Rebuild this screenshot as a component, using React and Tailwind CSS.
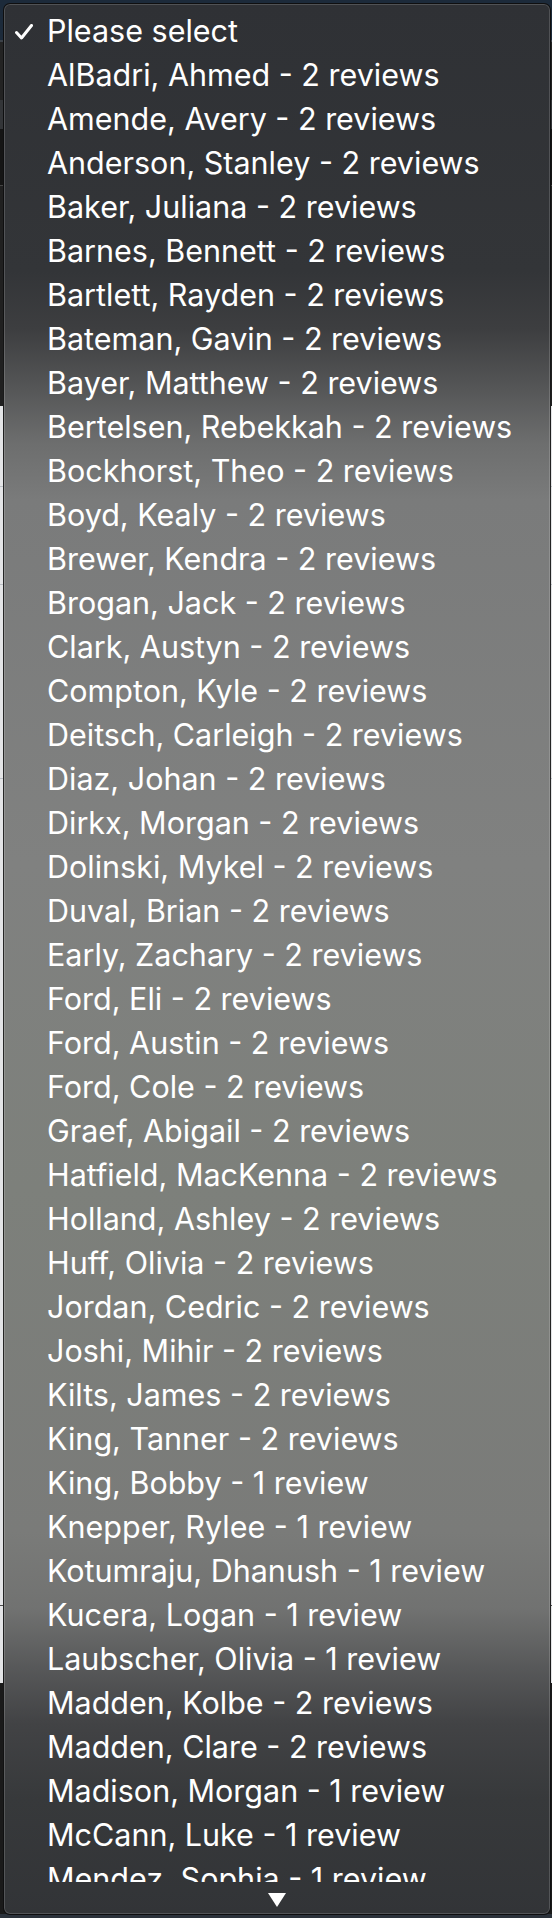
import React from 'react';

const options = [
  'AlBadri, Ahmed - 2 reviews',
  'Amende, Avery - 2 reviews',
  'Anderson, Stanley - 2 reviews',
  'Baker, Juliana - 2 reviews',
  'Barnes, Bennett - 2 reviews',
  'Bartlett, Rayden - 2 reviews',
  'Bateman, Gavin - 2 reviews',
  'Bayer, Matthew - 2 reviews',
  'Bertelsen, Rebekkah - 2 reviews',
  'Bockhorst, Theo - 2 reviews',
  'Boyd, Kealy - 2 reviews',
  'Brewer, Kendra - 2 reviews',
  'Brogan, Jack - 2 reviews',
  'Clark, Austyn - 2 reviews',
  'Compton, Kyle - 2 reviews',
  'Deitsch, Carleigh - 2 reviews',
  'Diaz, Johan - 2 reviews',
  'Dirkx, Morgan - 2 reviews',
  'Dolinski, Mykel - 2 reviews',
  'Duval, Brian - 2 reviews',
  'Early, Zachary - 2 reviews',
  'Ford, Eli - 2 reviews',
  'Ford, Austin - 2 reviews',
  'Ford, Cole - 2 reviews',
  'Graef, Abigail - 2 reviews',
  'Hatfield, MacKenna - 2 reviews',
  'Holland, Ashley - 2 reviews',
  'Huff, Olivia - 2 reviews',
  'Jordan, Cedric - 2 reviews',
  'Joshi, Mihir - 2 reviews',
  'Kilts, James - 2 reviews',
  'King, Tanner - 2 reviews',
  'King, Bobby - 1 review',
  'Knepper, Rylee - 1 review',
  'Kotumraju, Dhanush - 1 review',
  'Kucera, Logan - 1 review',
  'Laubscher, Olivia - 1 review',
  'Madden, Kolbe - 2 reviews',
  'Madden, Clare - 2 reviews',
  'Madison, Morgan - 1 review',
  'McCann, Luke - 1 review',
  'Mendez, Sophia - 1 review',
];

function Row({ label, checked }) {
  return (
    <div className="flex items-center h-[44px] leading-[44px] shrink-0">
      <div className="w-[43px] shrink-0 flex items-center">
        {checked && (
          <svg width="18" height="16" viewBox="0 0 18 16" className="ml-[11px] mt-[1px]">
            <path d="M1.5 8.5 L6.5 14 L16.5 1.5" fill="none" stroke="#ffffff" strokeWidth="3" strokeLinecap="round" strokeLinejoin="round" />
          </svg>
        )}
      </div>
      <span className="whitespace-nowrap">{label}</span>
    </div>
  );
}

export default function App() {
  return (
    <div className="relative w-[552px] h-[1918px] overflow-hidden">
      {/* page behind the popup */}
      <div className="flex flex-col w-full h-full">
        <div className="h-[40px] bg-[#1c2a3a]" />
        <div className="h-[2px] bg-[#3b4148]" />
        <div className="h-[58px] bg-[#232323]" />
        <div className="h-[29px] bg-[#333538]" />
        <div className="h-[56px] bg-[#151515]" />
        <div className="h-[1px] bg-[#444]" />
        <div className="h-[220px] bg-[#202020]" />
        <div className="h-[80px] bg-[#e3e4e6]" />
        <div className="h-[1px] bg-[#babec4]" />
        <div className="h-[97px] bg-[#e3e4e6]" />
        <div className="h-[1px] bg-[#babec4]" />
        <div className="h-[193px] bg-[#e3e4e6]" />
        <div className="h-[1px] bg-[#babec4]" />
        <div className="h-[826px] bg-[#e3e4e6]" />
        <div className="h-[1px] bg-[#4a4a4a]" />
        <div className="h-[77px] bg-[#e3e4e6]" />
        <div className="flex-1 bg-[#1a1a1a]" />
        <div className="h-[4px] bg-[#2b323b]" />
      </div>

      {/* native select popup */}
      <div className="absolute left-[3px] top-[3px] w-[548px] h-[1912px] rounded-[7px] border border-black/70 shadow-[inset_0_0_0_1px_rgba(255,255,255,0.16)] bg-[linear-gradient(180deg,#2f3135_0%,#333538_14%,#3d3e40_17%,#545556_20%,#6d6e6e_23%,#7a7b7b_26%,#808180_45%,#7d807b_62%,#7a7b79_80%,#717271_84%,#58595a_87%,#424345_90%,#37393b_94%,#323437_100%)] flex flex-col text-white text-[30.5px] font-['Inter',sans-serif]">
        <div className="flex-1 overflow-hidden pt-[5px] flex flex-col">
          <Row label="Please select" checked />
          {options.map((o) => (
            <Row key={o} label={o} />
          ))}
        </div>
        <div className="h-[32px] shrink-0 flex justify-center pt-[10px]">
          <svg width="20" height="16" viewBox="0 0 20 16">
            <path d="M1 1 L19 1 L10 15 Z" fill="#ffffff" />
          </svg>
        </div>
      </div>
    </div>
  );
}
